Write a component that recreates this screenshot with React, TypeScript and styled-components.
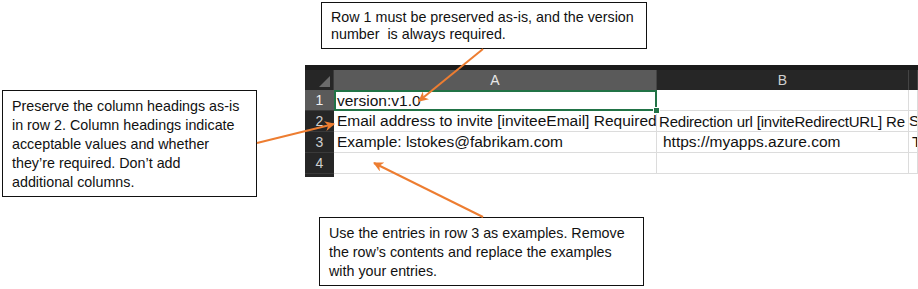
import React from 'react';
import styled, { createGlobalStyle } from 'styled-components';

const GlobalStyle = createGlobalStyle`
  html, body {
    margin: 0;
    padding: 0;
    background: #fff;
  }
  body {
    font-family: "Liberation Sans", Arial, sans-serif;
  }
`;

const Canvas = styled.div`
  position: relative;
  width: 918px;
  height: 289px;
  overflow: hidden;
  background: #fff;
  padding: 65px 0 0 305px;
  box-sizing: border-box;
`;

const Sheet = styled.div`
  display: grid;
  grid-template-columns: 29px 323px 252px 1fr;
  grid-template-rows: 5px 20px repeat(4, 21px) 3px;
  width: 613px;
  background: #1f1f1f;
  font-family: "Liberation Sans", Arial, sans-serif;
`;

const TopBand = styled.div`
  grid-column: 1 / -1;
  background: #1b1b1b;
`;

const Corner = styled.div`
  position: relative;
  background: #262626;
  border-right: 1px solid #3a3a3a;

  &::after {
    content: '';
    position: absolute;
    right: 3px;
    bottom: 3px;
    border-style: solid;
    border-width: 0 0 11px 11px;
    border-color: transparent transparent #6b6b6b transparent;
  }
`;

const ColHead = styled.div<{ $active?: boolean }>`
  display: flex;
  align-items: center;
  justify-content: center;
  background: ${(p) => (p.$active ? '#5a5a5a' : '#262626')};
  color: ${(p) => (p.$active ? '#e8e8e8' : '#d0d0d0')};
  border-right: 1px solid #444;
  font-size: 14px;
`;

const RowHead = styled.div<{ $active?: boolean }>`
  display: flex;
  align-items: center;
  justify-content: center;
  background: ${(p) => (p.$active ? '#5a5a5a' : '#262626')};
  color: ${(p) => (p.$active ? '#f0f0f0' : '#d0d0d0')};
  border-bottom: 1px solid #3a3a3a;
  font-size: 14px;
`;

const Cell = styled.div<{ $pad?: number; $tight?: boolean }>`
  display: flex;
  align-items: center;
  background: #fff;
  color: #111;
  font-size: ${(p) => (p.$tight ? '15px' : '15.5px')};
  letter-spacing: ${(p) => (p.$tight ? '-0.2px' : '0')};
  white-space: nowrap;
  overflow: hidden;
  padding-left: ${(p) => p.$pad ?? 3}px;
  border-right: 1px solid #dcdcdc;
  border-bottom: 1px solid #dcdcdc;
`;

const SelectedCell = styled(Cell)`
  position: relative;
  overflow: visible;
  box-shadow: inset 0 0 0 2px #217346;
  border: none;

  &::after {
    content: '';
    position: absolute;
    right: -3px;
    bottom: -3px;
    width: 5px;
    height: 5px;
    background: #217346;
    border: 1px solid #fff;
  }
`;

const Tail = styled.div`
  grid-column: 1 / -1;
  display: grid;
  grid-template-columns: 29px 1fr;
`;

const TailHead = styled.div`
  background: #262626;
`;

const TailCells = styled.div`
  background: #fff;
`;

const Callout = styled.div<{ $x: number; $y: number; $w: number; $h: number; $lh: number; $top: number }>`
  position: absolute;
  left: ${(p) => p.$x}px;
  top: ${(p) => p.$y}px;
  width: ${(p) => p.$w}px;
  height: ${(p) => p.$h}px;
  box-sizing: border-box;
  border: 1px solid #111;
  background: #fff;
  padding: ${(p) => p.$top}px 9px 0;
  font-family: "Liberation Sans", Arial, sans-serif;
  font-size: 14.3px;
  line-height: ${(p) => p.$lh}px;
  color: #111;
`;

const Line = styled.div`
  white-space: nowrap;
`;

const Arrows = styled.svg`
  position: absolute;
  left: 0;
  top: 0;
  pointer-events: none;
`;

const ORANGE = '#ED7D31';

const rows = [
  { n: 1, a: 'version:v1.0', b: '', c: '', active: true },
  { n: 2, a: 'Email address to invite [inviteeEmail] Required', b: 'Redirection url [inviteRedirectURL] Re', c: 'S' },
  { n: 3, a: 'Example: lstokes@fabrikam.com', b: ' https://myapps.azure.com', c: 'T' },
  { n: 4, a: '', b: '', c: '' },
];

export default function App() {
  return (
    <>
      <GlobalStyle />
      <Canvas>
        <Sheet>
          <TopBand />
          <Corner />
          <ColHead $active>A</ColHead>
          <ColHead>B</ColHead>
          <ColHead />
          {rows.map((r) => (
            <React.Fragment key={r.n}>
              <RowHead $active={r.active}>{r.n}</RowHead>
              {r.active ? <SelectedCell>{r.a}</SelectedCell> : <Cell>{r.a}</Cell>}
              <Cell $pad={r.n === 3 ? 6 : 2} $tight={r.n === 2}>{r.b}</Cell>
              <Cell $pad={r.n === 3 ? 3 : 0}>{r.c}</Cell>
            </React.Fragment>
          ))}
          <Tail>
            <TailHead />
            <TailCells />
          </Tail>
        </Sheet>

        <Callout $x={321} $y={2} $w={326} $h={47} $lh={17} $top={6}>
          <Line>Row 1 must be preserved as-is, and the version</Line>
          <Line>number&nbsp; is always required.</Line>
        </Callout>

        <Callout $x={2} $y={90} $w={255} $h={107} $lh={19} $top={6}>
          <Line>Preserve the column headings as-is</Line>
          <Line>in row 2. Column headings indicate</Line>
          <Line>acceptable values and whether</Line>
          <Line>they’re required. Don’t add</Line>
          <Line>additional columns.</Line>
        </Callout>

        <Callout $x={319} $y={217} $w={325} $h={69} $lh={19} $top={6}>
          <Line>Use the entries in row 3 as examples. Remove</Line>
          <Line>the row’s contents and replace the examples</Line>
          <Line>with your entries.</Line>
        </Callout>

        <Arrows width={918} height={289} viewBox="0 0 918 289">
          <defs>
            <marker id="head" viewBox="0 0 10 10" refX="9" refY="5" markerWidth="5" markerHeight="5" orient="auto">
              <path d="M0,0 L10,5 L0,10 L3,5 Z" fill={ORANGE} />
            </marker>
          </defs>
          <line x1={483} y1={49} x2={419} y2={101} stroke={ORANGE} strokeWidth={2} markerEnd="url(#head)" />
          <line x1={257} y1={143} x2={334} y2={124} stroke={ORANGE} strokeWidth={2} markerEnd="url(#head)" />
          <line x1={483} y1={217} x2={374} y2={163} stroke={ORANGE} strokeWidth={2} markerEnd="url(#head)" />
        </Arrows>
      </Canvas>
    </>
  );
}
